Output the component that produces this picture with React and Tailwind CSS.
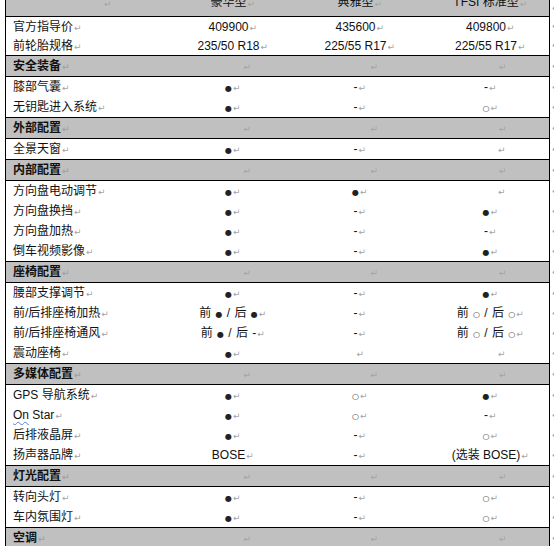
import React from 'react'

const SANS = "font-['Liberation_Sans','Noto_Sans_CJK_SC',sans-serif]"

// paragraph mark, zero width so centering ignores it (like Word)
function Mark({ className = '' }) {
  return (
    <span
      className={`inline-block w-0 whitespace-nowrap font-['DejaVu_Sans',sans-serif] text-[9px] leading-none text-[#a3a3a3] pl-[1px] ${className}`}
    >
      ↵
    </span>
  )
}

function Dot() {
  return <span className="font-['DejaVu_Sans',sans-serif] text-[8px] text-[#222]">●</span>
}

function Ring() {
  return <span className="font-['DejaVu_Sans',sans-serif] text-[8px] text-[#333]">○</span>
}

function Dash() {
  return <span>-</span>
}

function Split({ a, b }) {
  return (
    <span className="[word-spacing:1px]">
      前 {a} / 后 {b}
    </span>
  )
}

const COLS = ['w-[118px]', 'w-[136px]', 'w-[125px]']

function Cell({ col, children, shift = '' }) {
  return (
    <div className={`${COLS[col]} shrink-0 flex items-center justify-center`}>
      {children != null ? (
        <span className="whitespace-nowrap">{children}</span>
      ) : null}
      <span className={shift}>
        <Mark />
      </span>
    </div>
  )
}

function Row({ h = 'h-[20px]', section = false, header = false, children }) {
  return (
    <div className="flex">
      <div className="w-[5px] shrink-0" />
      <div
        className={`flex w-[545px] shrink-0 border-x border-black ${h} ${
          section || header ? 'bg-[#c0c0c0]' : 'bg-white'
        } ${section ? 'border-y' : ''} ${header ? 'border-b overflow-hidden' : ''}`}
      >
        {children}
      </div>
      <div className="w-[4px] shrink-0 overflow-hidden flex items-center">
        <span className="pl-[2px] font-['DejaVu_Sans',sans-serif] text-[9px] leading-none text-[#a3a3a3]">↵</span>
      </div>
    </div>
  )
}

function Label({ children, bold = false }) {
  return (
    <div className={`w-[164px] shrink-0 flex items-center pl-[7px] whitespace-nowrap ${bold ? 'font-bold' : ''}`}>
      <span>{children}</span>
      <span className="inline-block w-[6px]">
        <Mark />
      </span>
    </div>
  )
}

function DataRow({ label, v, h, empty = [] }) {
  return (
    <Row h={h}>
      <Label>{label}</Label>
      {v.map((x, i) => (
        <Cell key={i} col={i} shift={x == null ? empty[i] || '' : ''}>
          {x}
        </Cell>
      ))}
    </Row>
  )
}

function SectionRow({ label }) {
  return (
    <Row h="h-[22px]" section>
      <Label bold>{label}</Label>
      <Cell col={0} shift="pl-[28px]" />
      <Cell col={1} shift="pl-[28px]" />
      <Cell col={2} shift="pl-[24px]" />
    </Row>
  )
}

const E3 = [null, null, 'pl-[22px]']

export default function App() {
  return (
    <div className={`w-[554px] h-[546px] overflow-hidden bg-white text-[12px] text-[#111] ${SANS}`}>
      {/* header, top is cut off */}
      <Row h="h-[17px]" header>
        <div className="w-[164px] shrink-0 flex items-end pb-[7px] pl-[97px] leading-[13px]">
          <Mark />
        </div>
        {['豪华型', '典雅型', 'TFSI 标准型'].map((t, i) => (
          <div key={t} className={`${COLS[i]} shrink-0 flex items-end justify-center pb-[7px] leading-[13px]`}>
            <span className="whitespace-nowrap">{t}</span>
            <Mark />
          </div>
        ))}
      </Row>

      <DataRow h="h-[19px]" label="官方指导价" v={['409900', '435600', '409800']} />
      <DataRow h="h-[19px]" label="前轮胎规格" v={['235/50 R18', '225/55 R17', '225/55 R17']} />

      <SectionRow label="安全装备" />
      <DataRow label="膝部气囊" v={[<Dot />, <Dash />, <Dash />]} />
      <DataRow label="无钥匙进入系统" v={[<Dot />, <Dash />, <Ring />]} />

      <SectionRow label="外部配置" />
      <DataRow label="全景天窗" v={[<Dot />, <Dash />, null]} empty={E3} />

      <SectionRow label="内部配置" />
      <DataRow label="方向盘电动调节" v={[<Dot />, <Dot />, null]} empty={E3} />
      <DataRow label="方向盘换挡" v={[<Dot />, <Dash />, <Dot />]} />
      <DataRow label="方向盘加热" v={[<Dot />, <Dash />, <Dash />]} />
      <DataRow label="倒车视频影像" v={[<Dot />, <Dash />, <Dot />]} />

      <SectionRow label="座椅配置" />
      <DataRow label="腰部支撑调节" v={[<Dot />, <Dash />, <Dot />]} />
      <DataRow
        label="前/后排座椅加热"
        v={[<Split a={<Dot />} b={<Dot />} />, <Dash />, <Split a={<Ring />} b={<Ring />} />]}
      />
      <DataRow
        label="前/后排座椅通风"
        v={[<Split a={<Dot />} b="-" />, <Dash />, <Split a={<Ring />} b={<Ring />} />]}
      />
      <DataRow label="震动座椅" v={[<Dot />, null, null]} empty={E3} />

      <SectionRow label="多媒体配置" />
      <DataRow label="GPS 导航系统" v={[<Dot />, <Ring />, <Dot />]} />
      <DataRow
        label={
          <>
            <span className="underline decoration-wavy decoration-[#5b7fd6] decoration-1 underline-offset-2">On</span> Star
          </>
        }
        v={[<Dot />, <Ring />, <Dash />]}
      />
      <DataRow label="后排液晶屏" v={[<Dot />, <Dash />, <Ring />]} />
      <DataRow label="扬声器品牌" v={['BOSE', <Dash />, '(选装 BOSE)']} />

      <SectionRow label="灯光配置" />
      <DataRow label="转向头灯" v={[<Dot />, <Dash />, <Ring />]} />
      <DataRow label="车内氛围灯" v={[<Dot />, <Dash />, <Ring />]} />

      <SectionRow label="空调" />
    </div>
  )
}
